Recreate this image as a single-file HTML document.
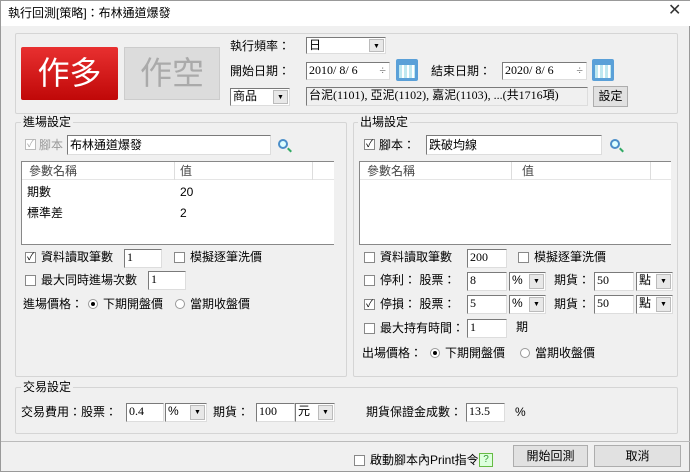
<!DOCTYPE html><html><head><meta charset="utf-8"><style>
*{box-sizing:border-box;margin:0;padding:0}
body{width:690px;height:472px;background:#f0f0f0;font-family:"Liberation Sans","Noto Sans CJK TC",sans-serif;font-size:12px;color:#000;position:relative;overflow:hidden;border:1px solid #999}
.a{position:absolute;white-space:nowrap;line-height:16px}
.grp{position:absolute;border:1px solid #d5d5d5;border-radius:2px}
.gt{position:absolute;background:#f0f0f0;padding:0 2px;line-height:14px}
.in{position:absolute;background:#fff;border:1px solid #7a7a7a;border-right-color:#ddd;border-bottom-color:#ddd;padding-left:2px;line-height:15px;font-family:"Liberation Serif","Noto Sans CJK TC",serif}
.sel{position:absolute;background:#fff;border:1px solid #7a7a7a;border-right-color:#ddd;border-bottom-color:#ddd;padding-left:2px;line-height:15px}
.sel i{position:absolute;right:1px;top:1px;bottom:1px;width:15px;background:#e8e8e8;border:1px solid #bbb;font-style:normal;font-size:7px;text-align:center;line-height:13px}
.cb{position:absolute;width:11px;height:11px;border:1px solid #888;background:#fff;font-size:10px;line-height:9px;text-align:center}
.rb{position:absolute;width:10px;height:10px;border-radius:50%;border:1px solid #999;background:#fff}
.rb.on:after{content:"";position:absolute;left:2px;top:2px;width:4px;height:4px;border-radius:50%;background:#000}
.btn{position:absolute;border:1px solid #adadad;background:#e1e1e1;text-align:center}
.cal{position:absolute;width:22px;height:22px;background:#5aa0d8;border-radius:2px}
.cal:after{content:"";position:absolute;left:3px;top:6px;width:16px;height:13px;background:repeating-linear-gradient(90deg,#bfe8f0 0 3px,#fff 3px 5px)}
.mag{position:absolute;width:10px;height:10px;border:2px solid #4a8ec8;border-radius:50%;background:#dff}
.mag:after{content:"";position:absolute;left:7px;top:8px;width:5px;height:2px;background:#3a6;transform:rotate(45deg)}
.list{position:absolute;background:#fff;border:1px solid #888;border-right:none}
.hd{position:absolute;left:0;right:0;top:0;height:18px;border-bottom:1px solid #e5e5e5}
</style></head><body>
<div style="position:absolute;left:0;top:0;width:690px;height:25px;background:#fff"></div>
<div class="a" style="left:7px;top:4px">執行回測[策略]：布林通道爆發</div>
<div class="a" style="left:667px;top:2px;font-size:16px;color:#333">✕</div>

<div class="grp" style="left:14px;top:32px;width:663px;height:81px;background:#f0f0f0"></div>
<div class="a" style="left:20px;top:46px;width:97px;height:53px;background:linear-gradient(#e83030,#c00808);color:#fff;font-size:32px;line-height:53px;text-align:center;border-radius:2px">作多</div>
<div class="a" style="left:123px;top:46px;width:96px;height:53px;background:#dcdcdc;border:1px solid #ccc;color:#aaa;font-size:32px;line-height:51px;text-align:center">作空</div>
<div class="a" style="left:229px;top:37px">執行頻率：</div>
<div class="sel" style="left:305px;top:36px;width:80px;height:17px">日<i>▼</i></div>
<div class="a" style="left:229px;top:62px">開始日期：</div>
<div class="in" style="left:305px;top:61px;width:84px;height:18px">2010/ 8/ 6<span style="position:absolute;right:3px;top:0;color:#666">÷</span></div>
<div class="cal" style="left:395px;top:58px"></div>
<div class="a" style="left:430px;top:62px">結束日期：</div>
<div class="in" style="left:501px;top:61px;width:85px;height:18px">2020/ 8/ 6<span style="position:absolute;right:3px;top:0;color:#666">÷</span></div>
<div class="cal" style="left:591px;top:58px"></div>
<div class="sel" style="left:229px;top:87px;width:60px;height:18px">商品<i>▼</i></div>
<div class="in" style="left:305px;top:86px;width:282px;height:19px;background:#f0f0f0">台泥(1101), 亞泥(1102), 嘉泥(1103), ...(共1716項)</div>
<div class="btn" style="left:592px;top:85px;width:35px;height:21px;line-height:19px">設定</div>

<div class="grp" style="left:14px;top:121px;width:332px;height:255px"></div>
<div class="gt" style="left:20px;top:114px">進場設定</div>
<div class="cb" style="left:24px;top:138px;color:#aaa;border-color:#bbb">✓</div>
<div class="a" style="left:38px;top:136px;color:#999">腳本</div>
<div class="in" style="left:66px;top:134px;width:204px;height:20px;line-height:17px;font-family:'Noto Sans CJK TC',sans-serif">布林通道爆發</div>
<div class="mag" style="left:277px;top:138px"></div>
<div class="list" style="left:20px;top:160px;width:313px;height:84px">
<div class="hd"></div>
<div style="position:absolute;left:152px;top:0;height:18px;border-left:1px solid #ddd"></div>
<div style="position:absolute;left:290px;top:0;height:18px;border-left:1px solid #ddd"></div>
<div class="a" style="left:7px;top:1px;color:#444">參數名稱</div><div class="a" style="left:158px;top:1px;color:#444">值</div>
<div class="a" style="left:5px;top:22px">期數</div><div class="a" style="left:158px;top:22px">20</div>
<div class="a" style="left:5px;top:43px">標準差</div><div class="a" style="left:158px;top:43px">2</div>
</div>
<div class="cb" style="left:24px;top:251px">✓</div><div class="a" style="left:40px;top:248px">資料讀取筆數</div>
<div class="in" style="left:123px;top:248px;width:38px;height:19px">1</div>
<div class="cb" style="left:173px;top:251px"></div><div class="a" style="left:189px;top:248px">模擬逐筆洗價</div>
<div class="cb" style="left:24px;top:274px"></div><div class="a" style="left:40px;top:271px">最大同時進場次數</div>
<div class="in" style="left:147px;top:270px;width:38px;height:19px">1</div>
<div class="a" style="left:22px;top:295px">進場價格：</div>
<div class="rb on" style="left:87px;top:298px"></div><div class="a" style="left:102px;top:295px">下期開盤價</div>
<div class="rb" style="left:174px;top:298px"></div><div class="a" style="left:189px;top:295px">當期收盤價</div>

<div class="grp" style="left:352px;top:121px;width:325px;height:255px"></div>
<div class="gt" style="left:357px;top:114px">出場設定</div>
<div class="cb" style="left:363px;top:138px">✓</div><div class="a" style="left:378px;top:136px">腳本：</div>
<div class="in" style="left:425px;top:134px;width:176px;height:20px;line-height:17px;font-family:'Noto Sans CJK TC',sans-serif">跌破均線</div>
<div class="mag" style="left:609px;top:138px"></div>
<div class="list" style="left:358px;top:160px;width:312px;height:84px">
<div class="hd"></div>
<div style="position:absolute;left:151px;top:0;height:18px;border-left:1px solid #ddd"></div>
<div style="position:absolute;left:290px;top:0;height:18px;border-left:1px solid #ddd"></div>
<div class="a" style="left:7px;top:1px;color:#444">參數名稱</div><div class="a" style="left:162px;top:1px;color:#444">值</div>
</div>
<div class="cb" style="left:363px;top:251px"></div><div class="a" style="left:379px;top:248px">資料讀取筆數</div>
<div class="in" style="left:466px;top:248px;width:40px;height:19px">200</div>
<div class="cb" style="left:517px;top:251px"></div><div class="a" style="left:533px;top:248px">模擬逐筆洗價</div>
<div class="cb" style="left:363px;top:274px"></div><div class="a" style="left:379px;top:271px">停利： 股票：</div>
<div class="in" style="left:466px;top:271px;width:40px;height:19px">8</div>
<div class="sel" style="left:508px;top:271px;width:37px;height:19px">%<i>▼</i></div>
<div class="a" style="left:553px;top:271px">期貨：</div>
<div class="in" style="left:593px;top:271px;width:40px;height:19px">50</div>
<div class="sel" style="left:635px;top:271px;width:37px;height:19px">點<i>▼</i></div>
<div class="cb" style="left:363px;top:298px">✓</div><div class="a" style="left:379px;top:295px">停損： 股票：</div>
<div class="in" style="left:466px;top:294px;width:40px;height:19px">5</div>
<div class="sel" style="left:508px;top:294px;width:37px;height:19px">%<i>▼</i></div>
<div class="a" style="left:553px;top:295px">期貨：</div>
<div class="in" style="left:593px;top:294px;width:40px;height:19px">50</div>
<div class="sel" style="left:635px;top:294px;width:37px;height:19px">點<i>▼</i></div>
<div class="cb" style="left:363px;top:322px"></div><div class="a" style="left:379px;top:319px">最大持有時間：</div>
<div class="in" style="left:466px;top:318px;width:40px;height:19px">1</div>
<div class="a" style="left:515px;top:318px">期</div>
<div class="a" style="left:361px;top:344px">出場價格：</div>
<div class="rb on" style="left:429px;top:347px"></div><div class="a" style="left:444px;top:344px">下期開盤價</div>
<div class="rb" style="left:519px;top:347px"></div><div class="a" style="left:534px;top:344px">當期收盤價</div>

<div class="grp" style="left:14px;top:386px;width:663px;height:47px"></div>
<div class="gt" style="left:20px;top:379px">交易設定</div>
<div class="a" style="left:20px;top:403px">交易費用：股票：</div>
<div class="in" style="left:125px;top:402px;width:38px;height:19px">0.4</div>
<div class="sel" style="left:164px;top:402px;width:42px;height:19px">%<i>▼</i></div>
<div class="a" style="left:212px;top:403px">期貨：</div>
<div class="in" style="left:255px;top:402px;width:39px;height:19px">100</div>
<div class="sel" style="left:294px;top:402px;width:40px;height:19px">元<i>▼</i></div>
<div class="a" style="left:365px;top:403px">期貨保證金成數：</div>
<div class="in" style="left:465px;top:402px;width:39px;height:19px">13.5</div>
<div class="a" style="left:514px;top:403px">%</div>

<div style="position:absolute;left:0;top:440px;width:690px;border-top:1px solid #bbb"></div>
<div class="cb" style="left:353px;top:454px"></div><div class="a" style="left:369px;top:451px">啟動腳本內Print指令</div>
<div class="a" style="left:478px;top:452px;width:14px;height:14px;border:1px solid #6b4;background:#dfd;color:#393;font-size:10px;line-height:12px;text-align:center">?</div>
<div class="btn" style="left:512px;top:444px;width:75px;height:22px;line-height:20px">開始回測</div>
<div class="btn" style="left:593px;top:444px;width:87px;height:22px;line-height:20px">取消</div>
</body></html>
